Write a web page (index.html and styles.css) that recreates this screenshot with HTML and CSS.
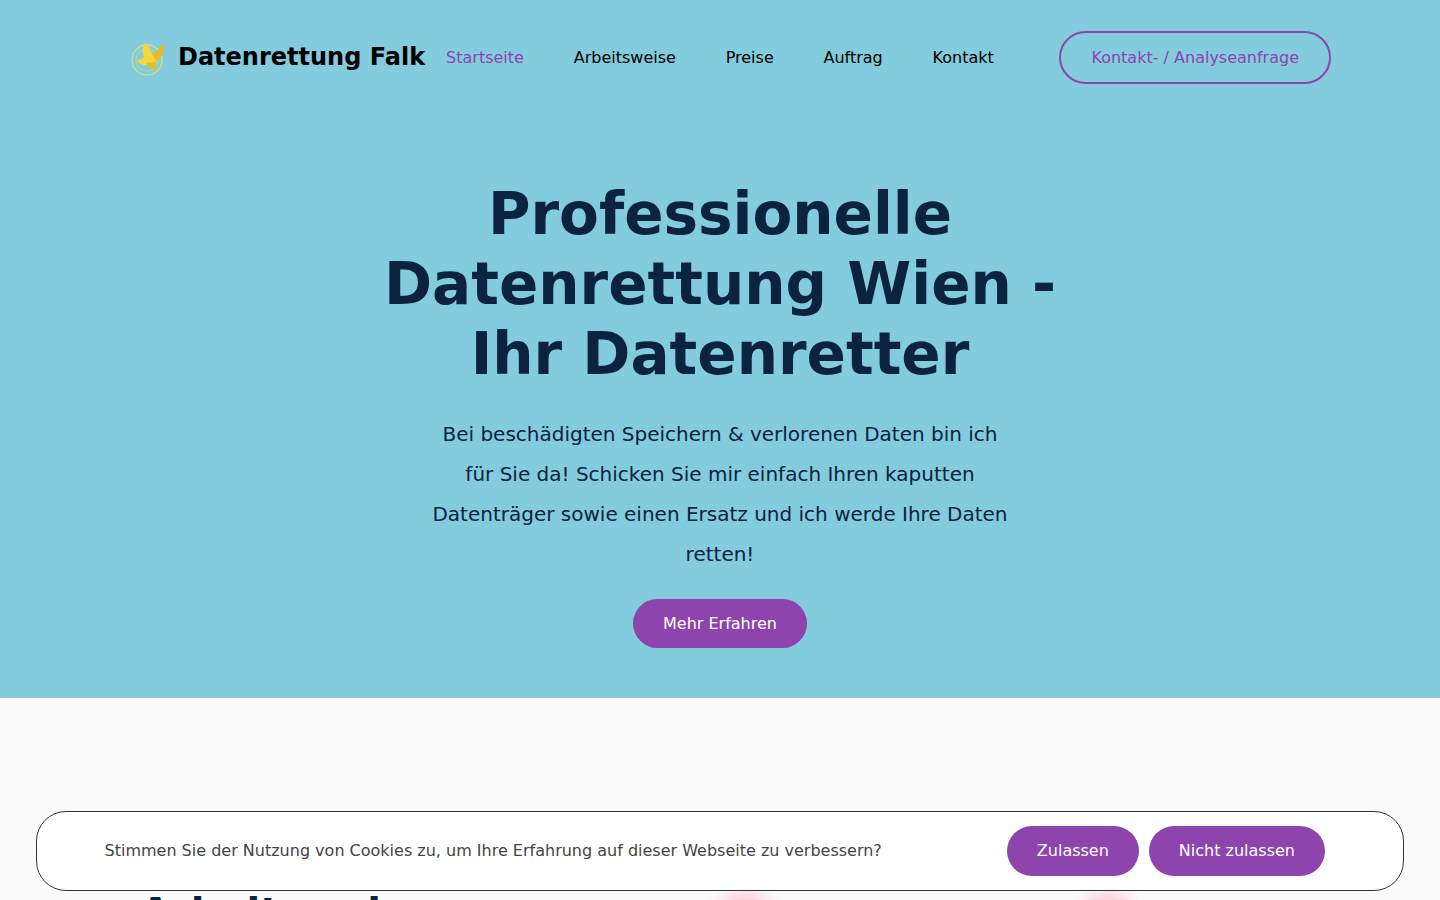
FILE: index.html
```html
<!DOCTYPE html>
<html lang="de">
<head>
  <meta charset="UTF-8" />
  <meta name="viewport" content="width=device-width, initial-scale=1.0" />
  <title>Datenrettung Falk</title>
  <link rel="stylesheet" href="styles.css">
</head>
<body>
  <div class="hero">
    <header class="topbar">
      <a class="brand" href="#">
        <svg class="brand-logo" viewBox="0 0 36 36" width="36" height="36">
          <circle cx="17" cy="20" r="15" fill="none" stroke="#cfe08a" stroke-width="1.3"/>
          <circle cx="17" cy="20" r="11" fill="none" stroke="#d6dc80" stroke-width="0.6"/>
          <path d="M7 20 C10 19 12 19 14 17 C12 12 12 8 15 3 C18 5 21 9 22 14 C26 12 30 8 34 3 C35 10 32 17 27 21 C25 23 25 26 28 30 C24 30 20 28 17 25 C13 26 9 24 7 20 Z" fill="#f3d637"/>
          <path d="M22 14 C26 12 30 8 34 3 C35 10 32 17 27 21 C25 19 23 17 22 14 Z" fill="#e9ba2e"/>
          <path d="M17 22 C20 23 24 23 27 21 C25 23 25 26 28 30 C24 30 20 28 17 25 Z" fill="#dcc02c"/>
        </svg>
        <span class="brand-name">Datenrettung Falk</span>
      </a>
      <nav class="nav">
        <a class="nav-link active" href="#">Startseite</a>
        <a class="nav-link" href="#">Arbeitsweise</a>
        <a class="nav-link" href="#">Preise</a>
        <a class="nav-link" href="#">Auftrag</a>
        <a class="nav-link" href="#">Kontakt</a>
      </nav>
      <a class="btn-outline" href="#">Kontakt- / Analyseanfrage</a>
    </header>

    <section class="hero-content">
      <h1>Professionelle Datenrettung Wien - Ihr Datenretter</h1>
      <p>Bei beschädigten Speichern &amp; verlorenen Daten bin ich für Sie da! Schicken Sie mir einfach Ihren kaputten Datenträger sowie einen Ersatz und ich werde Ihre Daten retten!</p>
      <a class="btn-more" href="#">Mehr Erfahren</a>
    </section>
  </div>

  <section class="next">
    <h2>Arbeitsweise</h2>
    <div class="blobs">
      <div class="blob"></div>
      <div class="blob"></div>
    </div>
  </section>

  <div class="cookie">
    <span class="cookie-text">Stimmen Sie der Nutzung von Cookies zu, um Ihre Erfahrung auf dieser Webseite zu verbessern?</span>
    <div class="cookie-actions">
      <button class="btn-cookie">Zulassen</button>
      <button class="btn-cookie">Nicht zulassen</button>
    </div>
  </div>
</body>
</html>
```

FILE: styles.css
```css
* {
  box-sizing: border-box;
}
body {
  margin: 0;
  height: 900px;
  overflow: hidden;
  background: #fafafa;
  font-family: "DejaVu Sans", sans-serif;
  color: #0c2340;
}
a {
  text-decoration: none;
}
.hero {
  height: 698px;
  background: #82ccdd;
}
.topbar {
  display: flex;
  align-items: center;
  height: 115px;
  padding: 0 109px 0 130px;
}
.brand {
  display: flex;
  align-items: center;
  gap: 12px;
  color: #000;
}
.brand-logo {
  display: block;
}
.brand-name {
  font-size: 24px;
  font-weight: 700;
  position: relative;
  top: -1px;
}
.nav {
  display: flex;
  gap: 49.8px;
  margin-left: 21px;
}
.nav-link {
  font-size: 16px;
  color: #000;
}
.nav-link.active {
  color: #8e44ad;
}
.btn-outline {
  margin-left: auto;
  padding: 0 30px;
  height: 53px;
  line-height: 49px;
  border: 2px solid #8e44ad;
  border-radius: 27px;
  font-size: 16px;
  color: #8e44ad;
}
.hero-content {
  display: flex;
  flex-direction: column;
  align-items: center;
  text-align: center;
  padding-top: 64px;
}
.hero-content h1 {
  width: 720px;
  margin: 0;
  font-size: 58px;
  line-height: 70px;
  font-weight: 700;
}
.hero-content p {
  width: 580px;
  margin: 25px 0 0;
  font-size: 20px;
  line-height: 40px;
}
.btn-more {
  margin-top: 25px;
  padding: 0 30px;
  height: 49px;
  line-height: 49px;
  border-radius: 25px;
  background: #8e44ad;
  color: #fff;
  font-size: 16px;
}
.next {
  position: relative;
  padding: 191px 140px 0;
}
.next h2 {
  margin: 0;
  font-size: 40px;
  line-height: 48px;
  font-weight: 700;
}
.blobs {
  position: absolute;
  top: 192px;
  left: 720px;
  display: flex;
  gap: 313px;
}
.blob {
  width: 50px;
  height: 50px;
  border-radius: 50%;
  background: #f9cfdc;
  filter: blur(8px);
}
.cookie {
  position: fixed;
  left: 36px;
  right: 36px;
  bottom: 9px;
  height: 80px;
  display: flex;
  align-items: center;
  justify-content: space-between;
  padding: 0 78px 0 67.5px;
  background: #fff;
  border: 1px solid #333;
  border-radius: 30px;
}
.cookie-text {
  font-size: 16px;
  color: #444;
  position: relative;
  top: -1px;
}
.cookie-actions {
  display: flex;
  gap: 10px;
}
.btn-cookie {
  height: 50px;
  padding: 0 30px 1px;
  border: 0;
  border-radius: 25px;
  background: #8e44ad;
  color: #fff;
  font-family: inherit;
  font-size: 16px;
}
```
